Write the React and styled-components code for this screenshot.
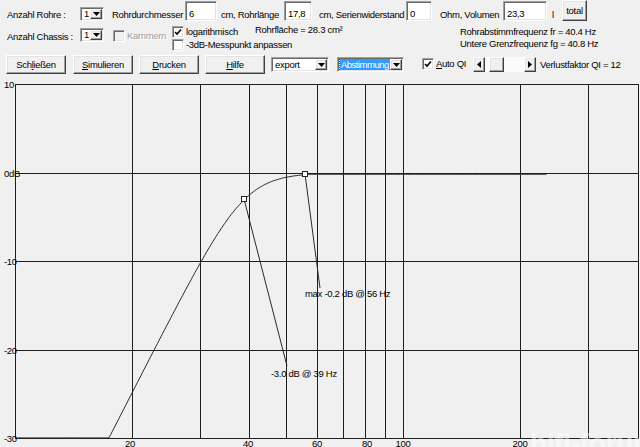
import React from 'react';
import styled, { createGlobalStyle } from 'styled-components';

const GlobalStyle = createGlobalStyle`
  html, body {
    margin: 0;
    padding: 0;
    background: #f0f0f0;
  }
  body {
    font-family: "Liberation Sans", Arial, sans-serif;
    font-size: 9.5px;
    letter-spacing: -0.3px;
    color: #000;
    overflow: hidden;
  }
`;

const Window = styled.div`
  width: 640px;
  height: 447px;
  background: #f0f0f0;
  overflow: hidden;
`;

const Header = styled.div`
  height: 76px;
`;

const Row = styled.div`
  display: grid;
  grid-template-columns: ${p => p.$cols};
  align-items: ${p => p.$align || 'start'};
  height: ${p => p.$h}px;
  padding-left: ${p => p.$pl}px;
`;

const Text = styled.span`
  display: block;
  line-height: 12px;
  white-space: nowrap;
  margin-top: ${p => p.$mt || 0}px;
  color: ${p => (p.$disabled ? '#a0a0a0' : '#000')};
  text-shadow: ${p => (p.$disabled ? '1px 1px #fff' : 'none')};
`;

const Sunken = styled.div`
  box-sizing: border-box;
  background: #fff;
  border: 1px solid;
  border-color: #a0a0a0 #fff #fff #a0a0a0;
  box-shadow: inset 1px 1px #696969, inset -1px -1px #e3e3e3;
`;

const Field = styled(Sunken)`
  width: ${p => p.$w}px;
  height: 20px;
  padding: 6px 0 0 3px;
  line-height: 12px;
  white-space: nowrap;
`;

const Combo = styled(Sunken)`
  display: flex;
  align-items: stretch;
  width: ${p => p.$w}px;
  height: ${p => p.$h}px;
  margin-top: ${p => p.$mt || 0}px;
  padding: 1px;
`;

const ComboText = styled.span`
  flex: 1;
  display: flex;
  align-items: center;
  padding-left: 2px;
  line-height: 12px;
  white-space: nowrap;
  overflow: hidden;
`;

const Highlight = styled.span`
  background: #3399ff;
  color: #fff;
  outline: 1px dotted #1a4f8a;
  padding: 0 1px;
  margin-left: -1px;
  letter-spacing: -0.5px;
`;

const Raised = styled.div`
  box-sizing: border-box;
  flex-shrink: 0;
  background: #f0f0f0;
  border: 1px solid;
  border-color: #fff #404040 #404040 #fff;
  box-shadow: inset -1px -1px #a0a0a0, inset 1px 1px #e3e3e3;
  display: flex;
  align-items: center;
  justify-content: center;
`;

const DropButton = styled(Raised)`
  width: 12px;
`;

const Button = styled(Raised)`
  width: ${p => p.$w}px;
  height: ${p => p.$h}px;
  margin-top: ${p => p.$mt || 0}px;
  line-height: 12px;
  white-space: nowrap;
`;

const Accel = styled.span`
  text-decoration: underline;
`;

const Check = styled.span`
  flex-shrink: 0;
  width: 12px;
  height: 12px;
  box-sizing: border-box;
  display: flex;
  align-items: center;
  justify-content: center;
  margin-top: ${p => p.$mt || 0}px;
  background: ${p => (p.$disabled ? '#f0f0f0' : '#fff')};
  border: 1px solid;
  border-color: #a0a0a0 #fff #fff #a0a0a0;
  box-shadow: inset 1px 1px #696969, inset -1px -1px #e3e3e3;
`;

const CheckColumn = styled.div`
  display: flex;
  flex-direction: column;
  gap: 1px;
  margin-top: 5px;
`;

const CheckRow = styled.div`
  display: flex;
  align-items: center;
  gap: 2px;
  height: 12px;
`;

const InfoColumn = styled.div`
  display: flex;
  flex-direction: column;
  margin-top: 5px;
`;

const ScrollBar = styled.div`
  display: flex;
  width: 63px;
  height: 15px;
  margin-top: 5px;
`;

const ScrollButton = styled(Raised)`
  width: ${p => p.$w}px;
  height: 15px;
`;

const Track = styled.div`
  width: ${p => p.$w}px;
  height: 15px;
  background: #fbfbfb;
`;

const Chart = styled.svg`
  display: block;
  width: 640px;
  height: 371px;
`;

const DownArrow = () => (
  <svg width="7" height="4" viewBox="0 0 7 4">
    <polygon points="0,0 7,0 3.5,4" fill="#000" />
  </svg>
);

const SideArrow = ({ left }) => (
  <svg width="4" height="7" viewBox="0 0 4 7">
    <polygon points={left ? '4,0 4,7 0,3.5' : '0,0 0,7 4,3.5'} fill="#000" />
  </svg>
);

const CheckMark = () => (
  <svg width="8" height="8" viewBox="0 0 8 8">
    <polyline points="1,4 3,6 7,1.5" fill="none" stroke="#000" strokeWidth="1.6" />
  </svg>
);

const ComboBox = ({ w, h, mt, children }) => (
  <Combo $w={w} $h={h} $mt={mt}>
    <ComboText>{children}</ComboText>
    <DropButton>
      <DownArrow />
    </DropButton>
  </Combo>
);

// chart geometry: log frequency axis, 10 Hz at x=15, 388 px per decade
const xf = f => 15 + 388 * Math.log10(f / 10);
const yd = db => 173 - db * 8.83;

const gridFreqs = [20, 30, 40, 50, 60, 70, 80, 90, 100, 200, 300];
const gridDb = [84, 173, 261, 350, 438];
const dbLabels = [
  { t: '10', y: 84 },
  { t: '0dB', y: 173 },
  { t: '-10', y: 261 },
  { t: '-20', y: 350 },
  { t: '-30', y: 438 },
];
const hzLabels = [
  { t: '20', x: 130 },
  { t: '40', x: 248 },
  { t: '60', x: 317 },
  { t: '80', x: 367 },
  { t: '100', x: 403 },
  { t: '200', x: 520 },
];

function curvePoints() {
  const pts = [];
  for (let f = 10; f <= 236; f *= 1.01) {
    let db = -10 * Math.log10(1 + Math.pow(39 / f, 8.6));
    if (db < -30) db = -30;
    if (db > -0.15) db = -0.15;
    pts.push(`${xf(f).toFixed(1)},${yd(db).toFixed(1)}`);
  }
  return pts.join(' ');
}

const labelStyle = {
  fontFamily: '"Liberation Sans", Arial, sans-serif',
  fontSize: '9.5px',
  letterSpacing: '-0.3px',
};

function ResponseChart() {
  return (
    <Chart viewBox="0 76 640 371">
      <g stroke="#1e1e1e" strokeWidth="1" shapeRendering="crispEdges">
        {gridDb.map(y => (
          <line key={y} x1="15" x2="638" y1={y + 0.5} y2={y + 0.5} />
        ))}
        <line x1="15.5" x2="15.5" y1="84" y2="439" />
        <line x1="638.5" x2="638.5" y1="84" y2="439" />
        {gridFreqs.map(f => {
          const x = Math.round(xf(f)) + 0.5;
          return <line key={f} x1={x} x2={x} y1="84" y2="439" />;
        })}
      </g>
      <polyline points={curvePoints()} fill="none" stroke="#2a2a2a" strokeWidth="1" />
      <g stroke="#2a2a2a" strokeWidth="1">
        <line x1="244" y1="199" x2="287" y2="366" />
        <line x1="305" y1="174" x2="320" y2="288" />
      </g>
      <rect x="241.5" y="196.5" width="5" height="5" fill="#fff" stroke="#222" />
      <rect x="302.5" y="171.5" width="5" height="5" fill="#fff" stroke="#222" />
      <text
        x="530"
        y="453"
        fill="#ffffff"
        opacity="0.5"
        style={{ fontFamily: '"Liberation Sans", Arial, sans-serif', fontSize: '28px', fontWeight: 700 }}
      >
        hifi-forum.de
      </text>
      <g style={labelStyle} fill="#000">
        {dbLabels.map(l => (
          <text key={l.t} x="4" y={l.y + 3.5}>
            {l.t}
          </text>
        ))}
        {hzLabels.map(l => (
          <text key={l.t} x={l.x} y="447" textAnchor="middle">
            {l.t}
          </text>
        ))}
        <text x="305" y="296.5">max -0.2 dB @ 56 Hz</text>
        <text x="271" y="376.5">-3.0 dB @  39 Hz</text>
      </g>
    </Chart>
  );
}

export default function App() {
  return (
    <Window>
      <GlobalStyle />
      <Header>
        <Row
          $h={21}
          $pl={7}
          $align="end"
          $cols="73px 32px 73px 36px 63px 35px 87px 34px 63px 49px 10px 25px"
        >
          <Text>Anzahl Rohre :</Text>
          <ComboBox w={24} h={14}>1</ComboBox>
          <Text>Rohrdurchmesser</Text>
          <Field $w={32}>6</Field>
          <Text>cm, Rohrlänge</Text>
          <Field $w={28}>17,8</Field>
          <Text>cm, Serienwiderstand</Text>
          <Field $w={26}>0</Field>
          <Text>Ohm, Volumen</Text>
          <Field $w={44}>23,3</Field>
          <Text>l</Text>
          <Button $w={25} $h={21}>total</Button>
        </Row>

        <Row $h={31} $pl={7} $cols="73px 33px 14px 45px 83px 205px 1fr">
          <Text $mt={10}>Anzahl Chassis :</Text>
          <ComboBox w={24} h={14} mt={7}>1</ComboBox>
          <Check $disabled $mt={9} />
          <Text $mt={9} $disabled>Kammern</Text>
          <CheckColumn>
            <CheckRow>
              <Check>
                <CheckMark />
              </Check>
              <Text>logarithmisch</Text>
            </CheckRow>
            <CheckRow>
              <Check />
              <Text>-3dB-Messpunkt anpassen</Text>
            </CheckRow>
          </CheckColumn>
          <Text $mt={3}>Rohrfläche = 28.3 cm²</Text>
          <InfoColumn>
            <Text>Rohrabstimmfrequenz fr = 40.4 Hz</Text>
            <Text>Untere Grenzfrequenz fg = 40.8 Hz</Text>
          </InfoColumn>
        </Row>

        <Row $h={24} $pl={6} $cols="67px 66px 66px 66px 66px 85px 14px 37px 67px 1fr">
          <Button $w={60} $h={19} $mt={3}>
            Sch<Accel>l</Accel>ießen
          </Button>
          <Button $w={60} $h={19} $mt={3}>
            <Accel>S</Accel>imulieren
          </Button>
          <Button $w={60} $h={19} $mt={3}>
            <Accel>D</Accel>rucken
          </Button>
          <Button $w={60} $h={19} $mt={3}>
            <Accel>H</Accel>ilfe
          </Button>
          <ComboBox w={58} h={15} mt={5}>export</ComboBox>
          <ComboBox w={67} h={15} mt={5}>
            <Highlight>Abstimmung</Highlight>
          </ComboBox>
          <Check $mt={6}>
            <CheckMark />
          </Check>
          <Text $mt={6}>
            <Accel>A</Accel>uto QI
          </Text>
          <ScrollBar>
            <ScrollButton $w={12}>
              <SideArrow left />
            </ScrollButton>
            <Track $w={4} />
            <ScrollButton $w={15} />
            <Track $w={20} />
            <ScrollButton $w={12}>
              <SideArrow />
            </ScrollButton>
          </ScrollBar>
          <Text $mt={7}>Verlustfaktor QI = 12</Text>
        </Row>
      </Header>
      <ResponseChart />
    </Window>
  );
}
